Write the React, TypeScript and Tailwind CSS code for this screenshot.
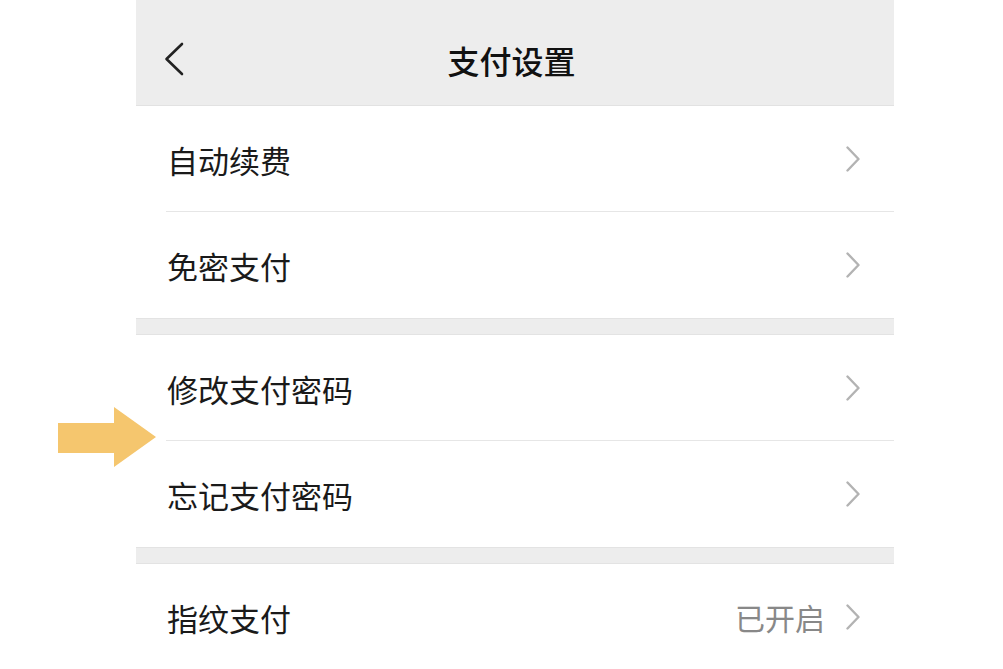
import React from 'react';

const font = { fontFamily: '"Noto Sans CJK SC", "Noto Sans", sans-serif' };

const ChevronRight = () => (
  <svg width="16" height="26" viewBox="0 0 16 26" className="shrink-0">
    <path d="M2.5 1.5 L13.5 13 L2.5 24.5" fill="none" stroke="#b3b3b3" strokeWidth="2.4" strokeLinecap="round" strokeLinejoin="round" />
  </svg>
);

const Row: React.FC<{ label: string; value?: string; divider?: boolean }> = ({ label, value, divider }) => (
  <div className="relative flex h-[106px] items-center pl-[31px] pr-[33px]">
    <span className="flex-1 text-[31px] leading-none text-[#1a1a1a]">{label}</span>
    {value && <span className="mr-[20px] text-[30px] leading-none text-[#888888]">{value}</span>}
    <ChevronRight />
    {divider && <div className="absolute bottom-0 left-[30px] right-0 h-px bg-[#e6e6e6]" />}
  </div>
);

const Gap = () => <div className="h-[17px] border-y border-[#e3e3e3] bg-[#ededed]" />;

export default function App() {
  return (
    <div className="relative h-[669px] w-[1003px] overflow-hidden bg-white" style={font}>
      {/* pointer arrow */}
      <svg className="absolute left-[58px] top-[407px]" width="100" height="62" viewBox="0 0 100 62">
        <polygon points="0,16 56,16 56,0 98,30 56,60 56,46 0,46" fill="#f5c66e" />
      </svg>

      <div className="ml-[136px] w-[758px]">
        {/* Header */}
        <header className="relative flex h-[106px] items-center justify-center border-b border-[#e2e2e2] bg-[#ededed] pr-[7px]">
          <button className="absolute left-[26px] top-[42px] flex h-[34px] w-[24px] items-center justify-center">
            <svg width="22" height="34" viewBox="0 0 22 34">
              <path d="M19 2 L3.5 17 L19 32" fill="none" stroke="#222" strokeWidth="2.6" strokeLinecap="round" strokeLinejoin="round" />
            </svg>
          </button>
          <h1 className="mt-[14px] text-[32px] font-medium leading-none text-[#111]">支付设置</h1>
        </header>

        <Row label="自动续费" divider />
        <Row label="免密支付" />
        <Gap />
        <Row label="修改支付密码" divider />
        <Row label="忘记支付密码" />
        <Gap />
        <Row label="指纹支付" value="已开启" />
      </div>
    </div>
  );
}
